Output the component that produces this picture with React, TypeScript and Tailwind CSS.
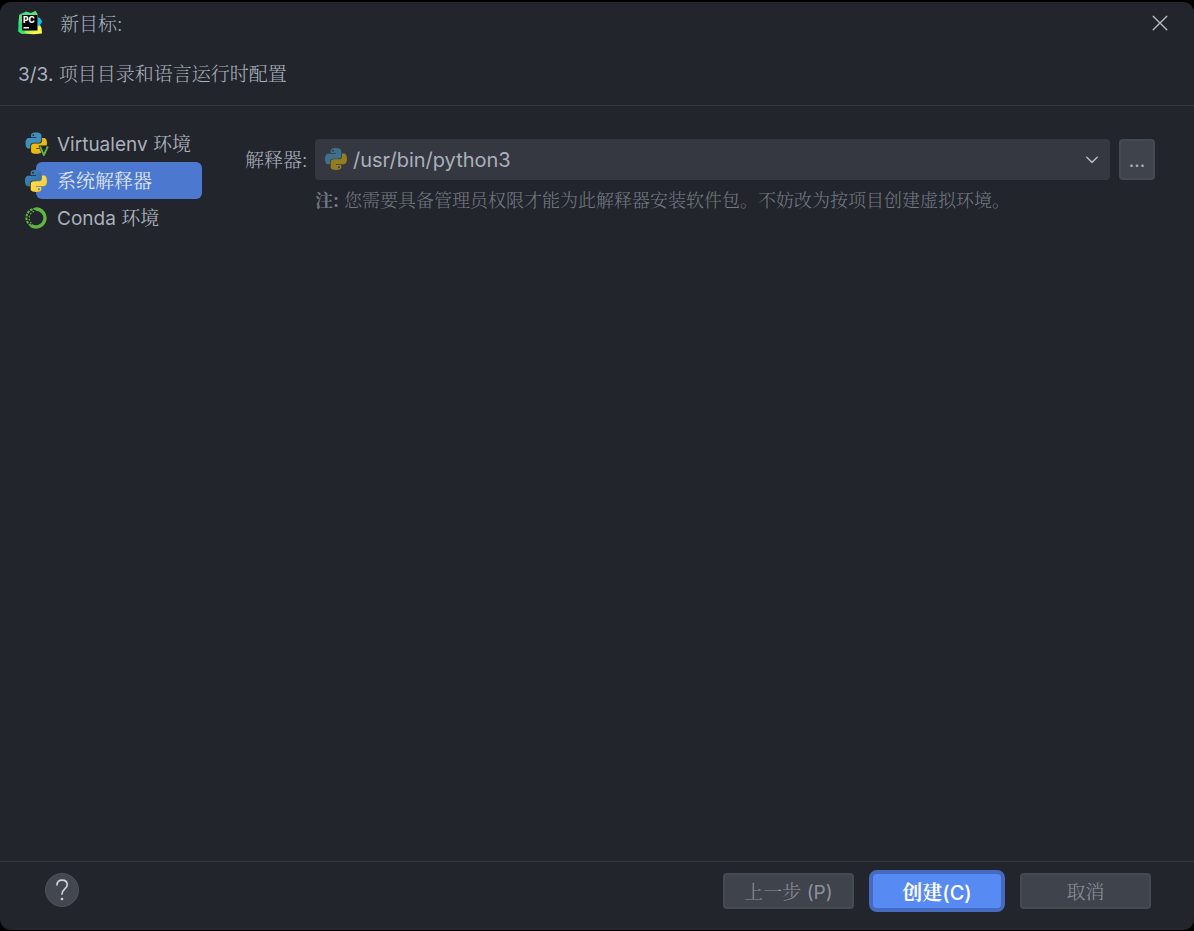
import { useId, useState, type ReactNode } from "react";

const SNAKE_TOP =
  "M126.916.072c-64.832 0-60.784 28.115-60.784 28.115l.072 29.128h61.868v8.745H41.631S.145 61.355.145 126.77c0 65.417 36.21 63.097 36.21 63.097h21.61v-30.356s-1.165-36.21 35.632-36.21h61.362s34.475.557 34.475-33.319V33.97S194.67.072 126.916.072zM92.802 19.66a11.12 11.12 0 0 1 11.13 11.13 11.12 11.12 0 0 1-11.13 11.13 11.12 11.12 0 0 1-11.13-11.13 11.12 11.12 0 0 1 11.13-11.13z";
const SNAKE_BOTTOM =
  "M128.757 254.126c64.832 0 60.784-28.115 60.784-28.115l-.072-29.127H127.6v-8.745h86.441s41.486 4.705 41.486-60.712c0-65.416-36.21-63.096-36.21-63.096h-21.61v30.355s1.165 36.21-35.632 36.21h-61.362s-34.475-.557-34.475 33.32v56.013s-5.235 33.897 62.518 33.897zm34.114-19.586a11.12 11.12 0 0 1-11.13-11.13 11.12 11.12 0 0 1 11.13-11.131 11.12 11.12 0 0 1 11.13 11.13 11.12 11.12 0 0 1-11.13 11.13z";

function PythonIcon() {
  const id = useId();
  return (
    <svg viewBox="0 0 256 255" className="size-[22px]" aria-hidden="true">
      <defs>
        <linearGradient id={id + "b"} x1="0" y1="0" x2="1" y2="1">
          <stop offset="0" stopColor="#4187bd" />
          <stop offset="1" stopColor="#326a9c" />
        </linearGradient>
        <linearGradient id={id + "y"} x1="0" y1="0" x2="1" y2="1">
          <stop offset="0" stopColor="#ffe052" />
          <stop offset="1" stopColor="#fbc92c" />
        </linearGradient>
      </defs>
      <path fill={`url(#${id}b)`} d={SNAKE_TOP} />
      <path fill={`url(#${id}y)`} d={SNAKE_BOTTOM} />
    </svg>
  );
}

function FlatPythonIcon() {
  return (
    <svg viewBox="0 0 256 255" className="size-[22px]" aria-hidden="true">
      <path fill="#3e6f8c" d={SNAKE_TOP} />
      <path fill="#927d20" d={SNAKE_BOTTOM} />
    </svg>
  );
}

function VirtualenvIcon() {
  return (
    <svg viewBox="0 0 24 24" className="size-6 shrink-0" aria-hidden="true">
      <g transform="translate(0.5 0.5) scale(0.084)">
        <path fill="#3d92bd" d={SNAKE_TOP} />
        <path fill="#edb90a" d={SNAKE_BOTTOM} />
      </g>
      <path d="M11 18h4v2.500h-4z" fill="#edb90a" />
      <path d="M13.500 13.500h10.500v10.500h-6.500z" fill="#22252c" />
      <path d="M15 14.500l3.900 8.500 3.900-8.500" fill="none" stroke="#62b543" strokeWidth="1.8" />
    </svg>
  );
}

function CondaIcon() {
  return (
    <svg viewBox="0 0 22 22" className="size-[22px]" fill="none" stroke="#62b543" aria-hidden="true">
      <path d="M10.500 2A9 9 0 1 1 6 18.500" strokeWidth="3.400" />
      <path d="M6 18.700A9.100 9.100 0 0 1 11 1.700" strokeWidth="2" strokeDasharray="2.600 1" />
      <path d="M6.400 16.200A7 7 0 0 1 9.800 4.200" strokeWidth="1.300" strokeDasharray="1.600 1.600" />
    </svg>
  );
}

function PyCharmIcon() {
  return (
    <svg viewBox="0 0 26 26" className="size-[26px]" aria-hidden="true">
      <defs>
        <linearGradient id="pc-green" x1="0" y1="0" x2="1" y2="1">
          <stop offset="0" stopColor="#28d89a" />
          <stop offset="0.5" stopColor="#6fe868" />
          <stop offset="0.8" stopColor="#fcf84a" />
        </linearGradient>
        <linearGradient id="pc-side" x1="0" y1="0" x2="0" y2="1">
          <stop offset="0" stopColor="#9cf05a" />
          <stop offset="0.6" stopColor="#21d789" />
          <stop offset="1" stopColor="#3bea62" />
        </linearGradient>
      </defs>
      <path d="M2.500 4.500L9 1.500l5 1.500L18.500.8l2 3.200L21.500 12l3 6 .5 5.500-8.200.7L4 23.500z" fill="url(#pc-green)" />
      <path d="M2.500 4.500L5.500 11 8 23.500l-4 0-2.800-2L1.500 12z" fill="url(#pc-side)" />
      <path d="M20.500 7l2.500 1L25.200 11.500 22 16.500 20.500 15z" fill="#07c3f2" />
      <path d="M5 5h15.500v15.500H5z" fill="#000" />
      <text x="6" y="13" fill="#fff" fontFamily="Inter, sans-serif" fontSize="8.500" fontWeight="800">
        PC
      </text>
      <path d="M6.500 17h5.500v1.500h-5.500z" fill="#fff" />
    </svg>
  );
}

const environments: { label: string; icon: ReactNode }[] = [
  { label: "Virtualenv 环境", icon: <VirtualenvIcon /> },
  { label: "系统解释器", icon: <PythonIcon /> },
  { label: "Conda 环境", icon: <CondaIcon /> },
];

const footerButton =
  "h-9 w-[131px] rounded-[4px] border-2 border-[#464a52] bg-[#3f434b] pt-[3px] text-[19px] leading-6 text-[#8c929d]";

export default function App() {
  const [selected, setSelected] = useState(1);

  return (
    <div className="flex min-h-screen flex-col bg-black pt-0.5 pb-px font-['Inter','Noto_Serif_CJK_SC','Noto_Sans_CJK_SC',sans-serif] text-[19px] leading-6 text-[#a9b0bd]">
      <main className="flex flex-1 flex-col rounded-[11px] bg-[#22252c]">
        <header className="border-b border-[#34373e] px-[17px]">
          <div className="flex h-[42px] items-center">
            <PyCharmIcon />
            <h1 className="ml-[17px] flex-1 pt-[3px] font-light">新目标:</h1>
            <button type="button" aria-label="关闭" className="mr-[7px] flex size-5 items-center justify-center text-[#b6b8bd]">
              <svg viewBox="0 0 16 16" className="size-4" fill="none" stroke="currentColor" strokeWidth="1.4" strokeLinecap="round" aria-hidden="true">
                <path d="M1.2 1.2l13.6 13.6M14.8 1.2L1.2 14.8" />
              </svg>
            </button>
          </div>
          <h2 className="pt-[19px] pb-[18px] pl-px font-light">
            <span className="font-normal">3/3.</span> 项目目录和语言运行时配置
          </h2>
        </header>

        <div className="flex flex-1 pt-[19px] pr-[39px]">
          <nav className="w-[202px] pl-[25px]">
            <ul>
              {environments.map((env, i) => (
                <li key={env.label}>
                  <button
                    type="button"
                    aria-pressed={i === selected}
                    onClick={() => setSelected(i)}
                    className="flex h-[37px] w-full items-center text-left"
                  >
                    <span className="z-10 flex w-[22px] shrink-0">{env.icon}</span>
                    <span
                      className={
                        "-ml-[11px] flex h-full flex-1 items-center rounded-md pt-0.5 pl-[21px] " +
                        (i === selected ? "bg-[#4d78cf] text-[#dfe5f2]" : "")
                      }
                    >
                      {env.label}
                    </span>
                  </button>
                </li>
              ))}
            </ul>
          </nav>

          <section className="flex-1 pt-3.5 pl-[43px]">
            <div className="flex items-center">
              <label htmlFor="interpreter" className="w-[70px] pt-[3px] font-light">
                解释器:
              </label>
              <div className="relative flex-1">
                <span className="pointer-events-none absolute top-[9px] left-2.5">
                  <FlatPythonIcon />
                </span>
                <select
                  id="interpreter"
                  className="h-[41px] w-full appearance-none rounded-[4px] bg-[#353840] pt-px pr-10 pl-[38px] text-[20px]"
                >
                  <option>/usr/bin/python3</option>
                </select>
                <svg viewBox="0 0 12 8" className="pointer-events-none absolute top-[17px] right-3 h-2 w-3" fill="none" stroke="#b4b8c0" strokeWidth="1.5" strokeLinecap="round" aria-hidden="true">
                  <path d="M.8 1.2L6 6.4l5.2-5.2" />
                </svg>
              </div>
              <button
                type="button"
                aria-label="浏览..."
                className="ml-[9px] h-[41px] w-9 rounded-[4px] border-2 border-[#464a52] bg-[#3f434b] pt-0.5 text-[#a9b0bd]"
              >
                ...
              </button>
            </div>
            <p className="mt-[9px] pl-[70px] text-[18px] font-light text-[#737985]">
              <b className="font-bold">注:</b> 您需要具备管理员权限才能为此解释器安装软件包。不妨改为按项目创建虚拟环境。
            </p>
          </section>
        </div>

        <footer className="flex items-start border-t border-[#34373e] pt-2 pr-[43px] pb-[18px] pl-[45px]">
          <button
            type="button"
            aria-label="帮助"
            className="mt-[3px] flex size-[34px] items-center justify-center rounded-full border border-[#4e525b] bg-[#43474f]"
          >
            <svg viewBox="0 0 14 24" className="h-6 w-3.5" fill="none" stroke="#cfd2d8" strokeWidth="1.7" strokeLinecap="round" aria-hidden="true">
              <path d="M2 6.8C2 3.8 4 2.2 7 2.2s5.2 1.7 5.2 4.5C12.2 10.8 7 11 7 16" />
              <circle cx="7" cy="21" r="1.3" fill="#cfd2d8" stroke="none" />
            </svg>
          </button>
          <div className="ml-auto flex items-center">
            <button type="button" className={footerButton}>
              <span className="font-light">上一步</span> (P)
            </button>
            <button
              type="button"
              className="mx-[15px] h-[42px] w-[136px] rounded-lg border-4 border-[#446bc0] bg-[#578af3] pt-[3px] text-[20px] leading-6 font-medium text-white"
            >
              <span className="font-bold">创建</span>(C)
            </button>
            <button type="button" className={footerButton}>
              <span className="font-light">取消</span>
            </button>
          </div>
        </footer>
      </main>
    </div>
  );
}
